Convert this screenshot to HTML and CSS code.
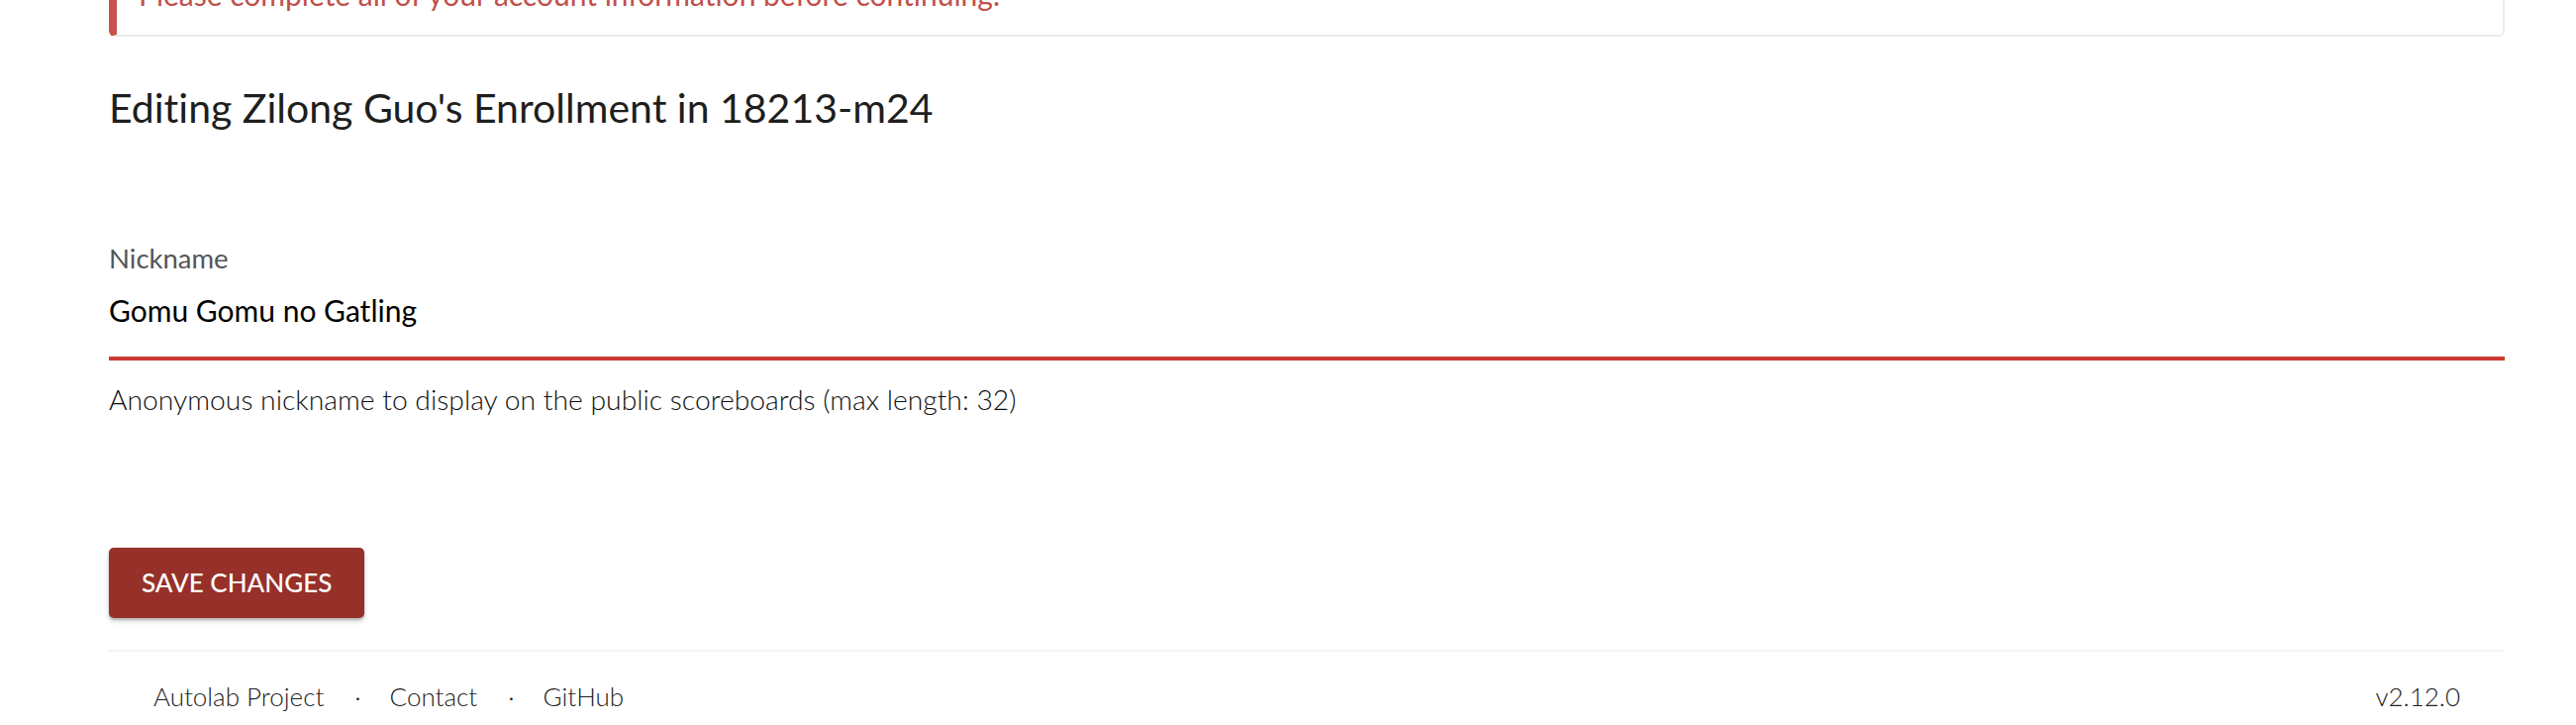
FILE: index.html
```html
<!DOCTYPE html>
<html lang="en">
<head>
<meta charset="utf-8">
<title>Edit Enrollment</title>
<link rel="stylesheet" href="styles.css">
</head>
<body>
<main class="page">
  <div class="alert">Please complete all of your account information before continuing.</div>
  <h3 class="title">Editing Zilong Guo's Enrollment in 18213-m24</h3>
  <form class="form">
    <div class="field">
      <label class="field-label">Nickname</label>
      <div class="field-input">Gomu Gomu no Gatling</div>
      <p class="field-help">Anonymous nickname to display on the public scoreboards (max length: 32)</p>
    </div>
    <button type="button" class="btn">SAVE CHANGES</button>
  </form>
  <footer class="footer">
    <nav class="footer-links">
      <a href="#">Autolab Project</a>
      <span class="dot">·</span>
      <a href="#">Contact</a>
      <span class="dot">·</span>
      <a href="#">GitHub</a>
    </nav>
    <span class="version">v2.12.0</span>
  </footer>
</main>
</body>
</html>
```

FILE: styles.css
```css
html, body {
  margin: 0;
  padding: 0;
  background: #ffffff;
}
body {
  font-family: "Lato", "Liberation Sans", sans-serif;
  font-variant-ligatures: none;
  color: #212121;
  overflow: hidden;
}
.page {
  padding: 0 72px 0 110px;
}
.alert {
  margin-top: -47px;
  padding: 20px 24px 20px 22px;
  border-left: 8px solid #c9514b;
  border-right: 2px solid #ececec;
  border-bottom: 2px solid #ececec;
  border-radius: 6px;
  font-size: 30px;
  line-height: 42px;
  color: #c0504c;
}
.title {
  margin: 48px 0 0;
  font-size: 41px;
  line-height: 48px;
  font-weight: 400;
  color: #1e1e1e;
}
.form {
  margin: 0;
}
.field {
  margin-top: 112px;
  display: flex;
  flex-direction: column;
}
.field-label {
  font-size: 27.5px;
  line-height: 32px;
  color: #555555;
}
.field-input {
  padding: 18px 0 29px;
  font-size: 30px;
  line-height: 36px;
  color: #000000;
  border-bottom: 4px solid #cb3a31;
}
.field-help {
  margin: 22px 0 0;
  font-size: 28.3px;
  line-height: 34px;
  font-weight: 300;
  color: #111111;
}
.btn {
  margin-top: 133px;
  display: block;
  height: 71px;
  padding: 0 33px;
  border: none;
  border-radius: 5px;
  background: #963029;
  color: #ffffff;
  font-family: inherit;
  font-size: 26px;
  line-height: 71px;
  font-weight: 500;
  box-shadow: 0 3px 5px rgba(0,0,0,0.2), 0 2px 2px rgba(0,0,0,0.14);
}
.footer {
  margin-top: 32px;
  border-top: 2px solid #f3f3f3;
  padding: 29px 45px 0;
  display: flex;
  justify-content: space-between;
  font-size: 26px;
  line-height: 32px;
  font-weight: 300;
  color: #222222;
}
.footer-links {
  display: flex;
}
.footer-links a {
  color: #222222;
  text-decoration: none;
}
.dot {
  margin: 0 29px 0 31px;
}
```
